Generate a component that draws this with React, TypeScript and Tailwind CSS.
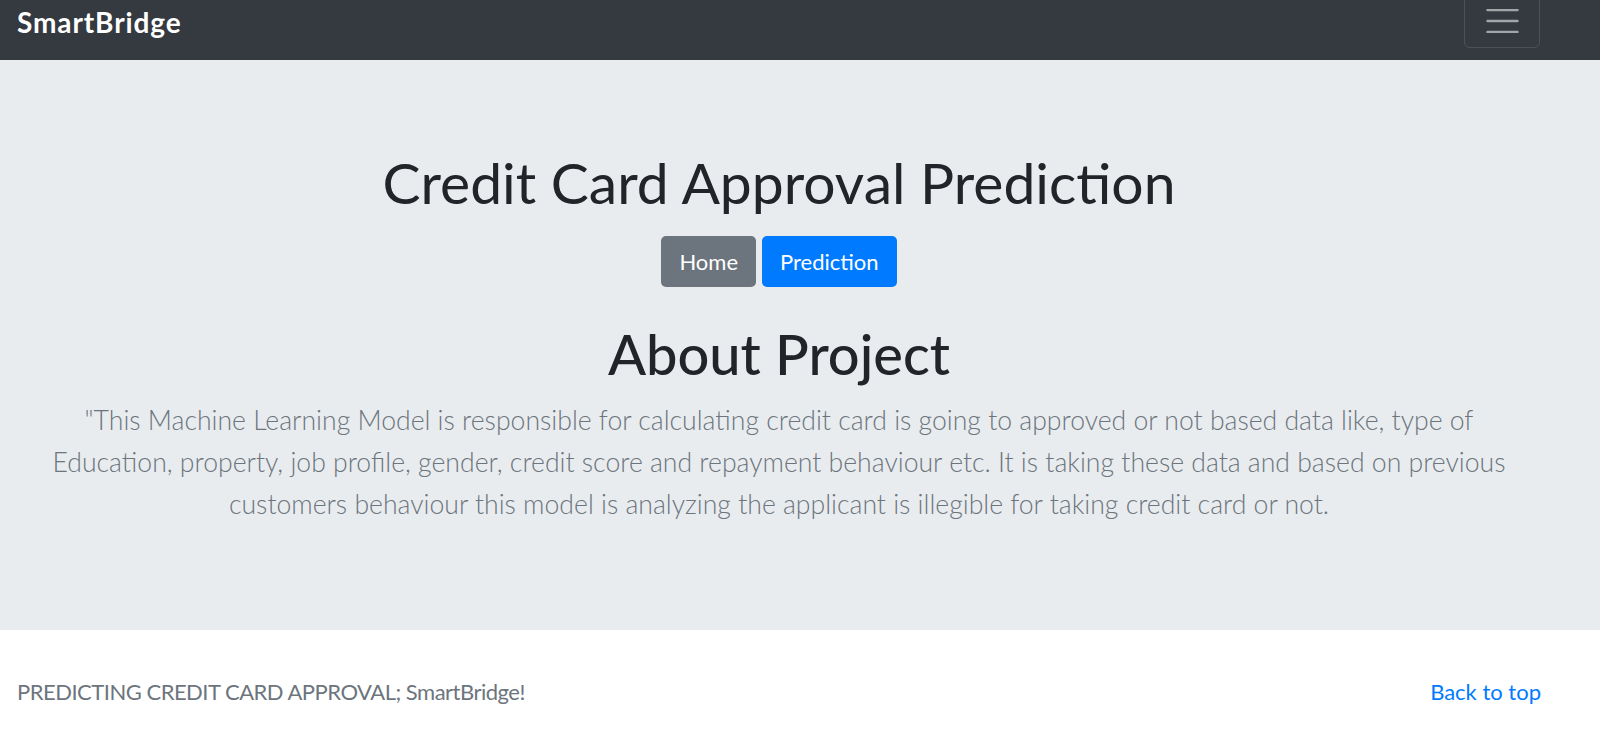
import React from "react";

export default function App() {
  return (
    <div className="min-h-[737px] bg-white font-['Lato',sans-serif]">
      <nav className="flex h-[60px] items-start justify-between overflow-hidden bg-[#343a40] pl-[17px] pr-[60px]">
        <a className="mt-[8px] text-[28px] font-bold leading-none tracking-[0.9px] text-white">SmartBridge</a>
        <div className="mt-[-6px] flex h-[54px] w-[76px] items-center justify-center rounded-[6px] border border-[rgba(255,255,255,0.12)]">
          <svg width="33" height="24" viewBox="0 0 33 24">
            <g stroke="rgba(255,255,255,0.55)" strokeWidth="2.4" strokeLinecap="round">
              <line x1="1.5" y1="1" x2="31.5" y2="1" />
              <line x1="1.5" y1="12" x2="31.5" y2="12" />
              <line x1="1.5" y1="23" x2="31.5" y2="23" />
            </g>
          </svg>
        </div>
      </nav>

      <section className="flex h-[570px] flex-col items-center bg-[#e9ecef] pr-[42px] pt-[88px] text-center">
        <h1 className="text-[57px] font-normal leading-[1.2] text-[#212529]">Credit Card Approval Prediction</h1>
        <div className="mt-[20px] flex gap-[6px]">
          <a className="flex h-[51px] items-center rounded-[5px] bg-[#6c757d] px-[18px] text-[22px] text-white">Home</a>
          <a className="flex h-[51px] items-center rounded-[5px] bg-[#007bff] px-[18px] text-[22px] text-white">Prediction</a>
        </div>
        <h2 className="mt-[33px] text-[56px] font-medium leading-[1.2] text-[#212529]">About Project</h2>
        <p className="mt-[11px] whitespace-nowrap text-[26.6px] font-light leading-[42px] text-[#6c757d]">
          "This Machine Learning Model is responsible for calculating credit card is going to approved or not based data like, type of
          <br />
          Education, property, job profile, gender, credit score and repayment behaviour etc. It is taking these data and based on previous
          <br />
          customers behaviour this model is analyzing the applicant is illegible for taking credit card or not.
        </p>
      </section>

      <footer className="flex h-[107px] items-start justify-between bg-white pl-[17px] pr-[59px] pt-[44px] text-[22px] leading-[36px]">
        <p className="tracking-[-0.5px] text-[#6c757d]">PREDICTING CREDIT CARD APPROVAL; SmartBridge!</p>
        <a className="text-[#007bff]">Back to top</a>
      </footer>
    </div>
  );
}
